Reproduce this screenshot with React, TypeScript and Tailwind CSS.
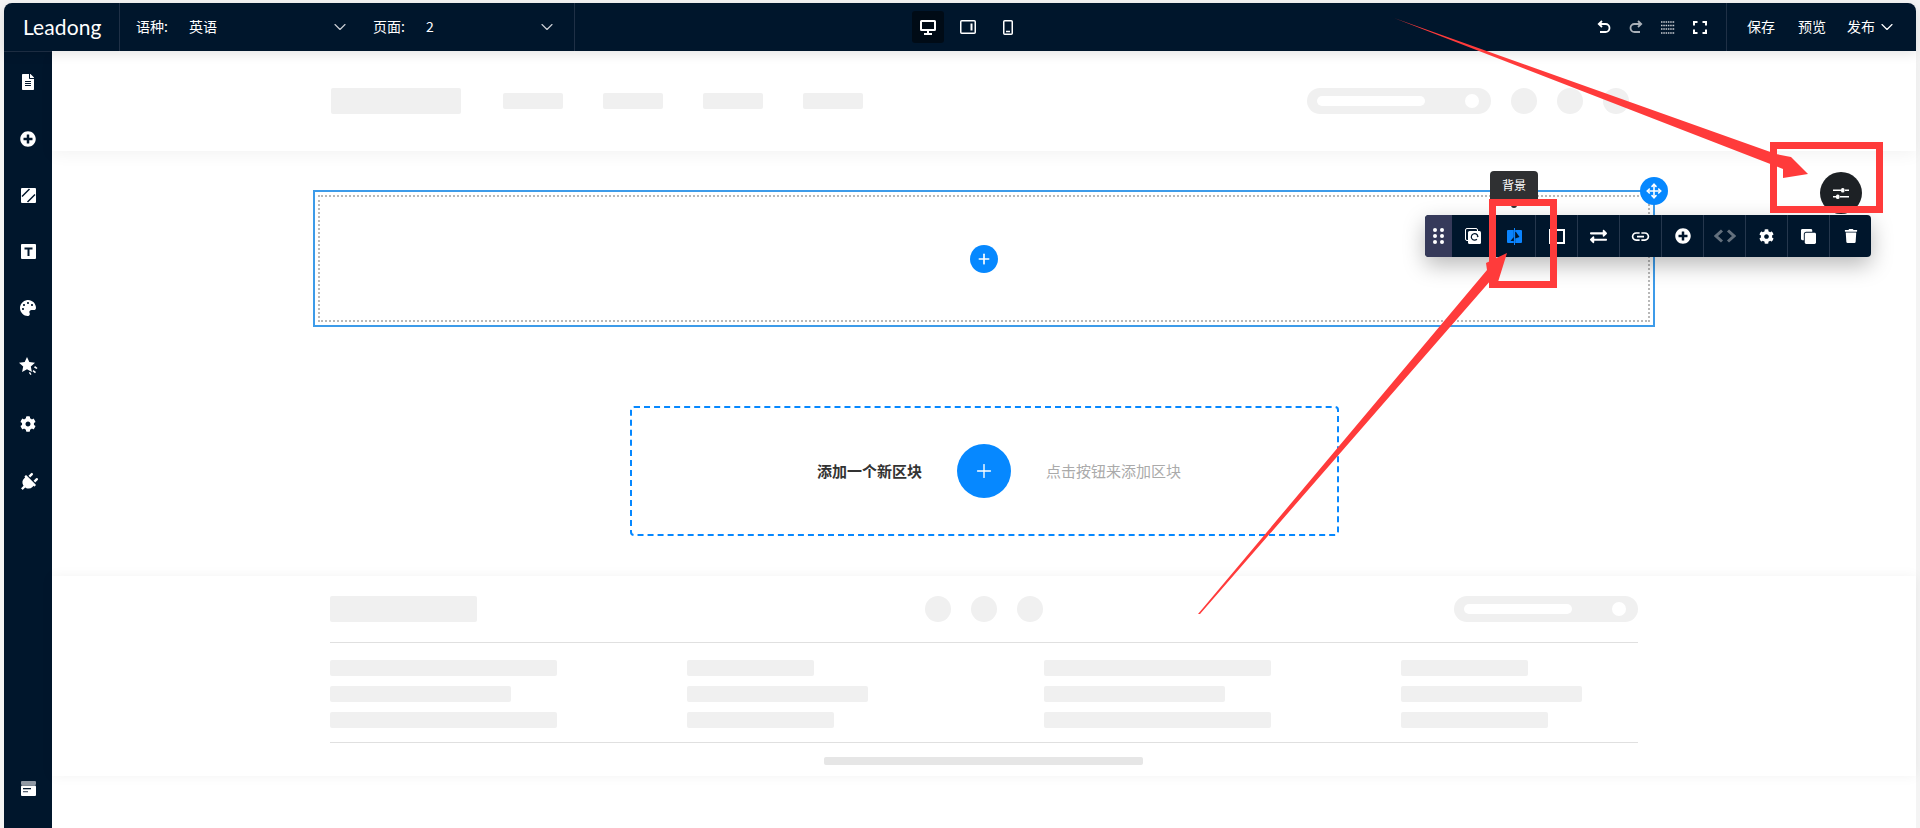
import { FaCog, FaExchangeAlt, FaFileAlt, FaPalette, FaPlug, FaPlusCircle, FaTrash, FaClone } from "react-icons/fa";
import { MdLink } from "react-icons/md";
import { ChevronDown, Move, Plus } from "lucide-react";

const cjk = "font-['Microsoft_YaHei','Noto_Sans_CJK_SC',sans-serif]";

function Skeleton({ className }: { className: string }) {
    return <div className={`rounded-[2px] bg-[#f0f0f0] ${className}`} />;
}

function SearchPill() {
    return (
        <div className="flex h-[26px] w-[184px] items-center justify-between rounded-full bg-[#f0f0f0] pl-[10px] pr-3">
            <div className="h-[10px] w-[108px] rounded-full bg-white" />
            <div className="h-[14px] w-[14px] rounded-full bg-white" />
        </div>
    );
}

function Dot() {
    return <div className="h-[26px] w-[26px] rounded-full bg-[#f0f0f0]" />;
}

function MonitorIcon() {
    return (
        <svg width="16" height="15" viewBox="0 0 16 15" fill="none" stroke="#fff" strokeWidth="2">
            <rect x="1" y="1" width="14" height="9" rx="0.500" />
            <path d="M8 10v3M4 14h8" />
        </svg>
    );
}

function TabletIcon() {
    return (
        <svg width="16" height="14" viewBox="0 0 16 14" fill="none" stroke="#fff" strokeWidth="1.500">
            <rect x="0.750" y="0.750" width="14.500" height="12.500" rx="1" />
            <path d="M11.500 3.500v7" strokeWidth="2" />
        </svg>
    );
}

function PhoneIcon() {
    return (
        <svg width="10" height="15" viewBox="0 0 10 15" fill="none" stroke="#fff" strokeWidth="1.500">
            <rect x="0.750" y="0.750" width="8.500" height="13.500" rx="1" />
            <path d="M3 11.500h4" strokeWidth="1.500" />
        </svg>
    );
}

function UndoIcon({ flip, color }: { flip?: boolean; color: string }) {
    return (
        <svg width="14" height="14" viewBox="0 0 14 14" fill="none" stroke={color} strokeWidth="1.800" className={flip ? "-scale-x-100" : ""}>
            <path d="M5 1 1.800 4 5 7" />
            <path d="M2 4h6.500a4 4 0 0 1 0 8H3" />
        </svg>
    );
}

function GridIcon() {
    return (
        <svg width="14" height="13" viewBox="0 0 14 13" fill="none" stroke="#c8ccd1" strokeWidth="1.500" strokeDasharray="1.500 0.800">
            <path d="M0 1h14M0 4.500h14M0 8h14M0 12h14" />
        </svg>
    );
}

function FullscreenIcon() {
    return (
        <svg width="14" height="13" viewBox="0 0 14 13" fill="none" stroke="#fff" strokeWidth="2">
            <path d="M1 4.500V1h3.500M9.500 1H13v3.500M13 8.500V12H9.500M4.500 12H1V8.500" />
        </svg>
    );
}

function SectionIcon() {
    return (
        <svg width="15" height="15" viewBox="0 0 15 15">
            <rect width="15" height="4" rx="1" fill="#8f98a3" />
            <rect y="4.500" width="15" height="10.500" rx="1" fill="#fff" />
            <path d="M2 7h8v1.300H2z" fill="#00162c" />
            <path d="M2 10h5v1.300H2z" fill="#5a6675" />
        </svg>
    );
}

function SlashIcon() {
    return (
        <svg width="15" height="15" viewBox="0 0 15 15">
            <rect width="15" height="15" rx="1" fill="#fff" />
            <path d="M1 8.500 8.500 1M6.500 14 14 6.500" stroke="#00162c" strokeWidth="1.500" />
        </svg>
    );
}

function TextIcon() {
    return (
        <svg width="15" height="15" viewBox="0 0 15 15">
            <rect width="15" height="15" rx="1" fill="#fff" />
            <path d="M3.500 3.500h8v2h-3V12h-2V5.500h-3z" fill="#00162c" />
        </svg>
    );
}

function StarIcon() {
    return (
        <svg width="19" height="18" viewBox="0 0 19 18" fill="#fff">
            <path d="M8 0l2.300 5 5.700.7-4.200 3.800 1.100 5.500L8 12.200 3.100 15l1.100-5.500L0 5.700 5.700 5z" />
            <path d="M16 9l2.500 2-1 1-2.500-1.500zM14.500 13l2.500 2-1 1.300-2.500-2zM11 15l1.500 2.300-1 .7-1.700-2.300z" />
        </svg>
    );
}

function SlidersIcon() {
    return (
        <svg width="16" height="13" viewBox="0 0 16 13" fill="#fff">
            <path d="M0 2.500h8v1.500H0zM12 2.500h4v1.500h-4zM0 9h3v1.500H0zM7 9h9v1.500H7z" />
            <rect x="8" y="1" width="3.500" height="4.500" rx="1.500" />
            <rect x="3" y="7.500" width="3.500" height="4.500" rx="1.500" />
        </svg>
    );
}

function CopyRefreshIcon() {
    return (
        <svg width="16" height="16" viewBox="0 0 16 16" fill="none">
            <rect x="0.500" y="0.500" width="12" height="12" rx="1.500" stroke="#fff" strokeWidth="1" />
            <rect x="3" y="3" width="13" height="13" rx="1.500" fill="#fff" />
            <path d="M12.800 8a3.300 3.300 0 1 0-.9 3.300" stroke="#00162c" strokeWidth="1.200" />
            <path d="M13.800 8h-2.200l1.100 1.500z" fill="#00162c" />
        </svg>
    );
}

function BackgroundIcon() {
    return (
        <svg width="15" height="17" viewBox="0 0 15 17">
            <path d="M0 3a1 1 0 0 1 1-1h5.800v13H1a1 1 0 0 1-1-1z" fill="#0a84ff" />
            <path d="M8.200 2H14a1 1 0 0 1 1 1v11a1 1 0 0 1-1 1H8.200z" fill="#0a84ff" />
            <path d="M7 0h1v17H7z" fill="#0a84ff" />
            <path d="M6.800 9v4H3.500z" fill="#00162c" />
            <path d="M8.200 4h.8l3.500 5-4.300 1.500z" fill="#00162c" />
        </svg>
    );
}

function CodeIcon() {
    return (
        <svg width="22" height="14" viewBox="0 0 22 14" fill="none" stroke="#63707d" strokeWidth="3">
            <path d="M8 1.500 2 7l6 5.500M14 1.500 20 7l-6 5.500" />
        </svg>
    );
}

const tools = [
    <CopyRefreshIcon />,
    <BackgroundIcon />,
    <div className="h-[15px] w-4 border-2 border-white" />,
    <FaExchangeAlt className="text-[17px] text-white" />,
    <MdLink className="text-[21px] text-white" />,
    <FaPlusCircle className="text-[16px] text-white" />,
    <CodeIcon />,
    <FaCog className="text-[15px] text-white" />,
    <FaClone className="-scale-y-100 text-[15px] text-white" />,
    <FaTrash className="text-[14px] text-white" />,
];

function Toolbar() {
    return (
        <div className="absolute left-[1110px] top-[23px] z-10 flex h-[42px] w-[446px] overflow-hidden rounded-[4px] bg-[#00162c] shadow-[0_8px_22px_rgba(0,0,0,0.28)]">
            <div className="grid w-[27px] grid-cols-2 content-center justify-center gap-x-[3px] gap-y-[2px] bg-[#363a5a] px-[8px]">
                {Array.from({ length: 6 }).map((_, i) => (
                    <div key={i} className="h-1 w-1 rounded-full bg-white" />
                ))}
            </div>
            {tools.map((icon, i) => (
                <div key={i} className={`flex h-full items-center justify-center ${i > 0 ? "w-[42px] border-l border-[#25374d]" : "w-[41px]"}`}>
                    {icon}
                </div>
            ))}
        </div>
    );
}

function Annotations() {
    return (
        <svg className="pointer-events-none absolute left-0 top-0 z-20" width="1920" height="828" fill="#ff3b3b">
            <polygon points="1394,18 1776,154 1791,157 1808,174 1783,178 1783,169" />
            <polygon points="1198,614 1487,270 1486,263 1507,253 1498,282 1491,280 1200,614" />
            <path fillRule="evenodd" d="M1489 199h68v89h-68zM1496 206v75h54v-75z" />
            <path fillRule="evenodd" d="M1770 142h113v71h-113zM1777 149v57h99v-57z" />
        </svg>
    );
}

export default function App() {
    return (
        <div className={`relative h-[828px] w-[1920px] overflow-hidden bg-[#f4f4f4] pl-1 pr-1 pt-[3px] ${cjk}`}>
            {/* top bar */}
            <div className="relative z-10 flex h-12 items-center rounded-t-lg bg-[#00162c] text-sm text-white shadow-[0_3px_12px_rgba(0,0,0,0.1)]">
                <div className="flex h-full w-[116px] items-center border-r border-[#1f3046] pl-[19px] font-['Lato',sans-serif] text-[21px] tracking-[0.1px]">
                    Leadong
                </div>
                <div className="flex h-full w-[455px] items-center border-r border-[#1f3046] pl-4">
                    <span className="w-[53px] pb-[2px]">语种:</span>
                    <span className="w-[141px] pb-[2px]">英语</span>
                    <ChevronDown size={20} strokeWidth={1.4} className="text-[#c9ced4]" />
                    <span className="ml-[23px] w-[53px] pb-[2px]">页面:</span>
                    <span className="w-[111px] pb-[2px]">2</span>
                    <ChevronDown size={20} strokeWidth={1.4} className="text-[#c9ced4]" />
                </div>
                <div className="ml-[337px] flex items-center">
                    <div className="flex h-8 w-8 items-center justify-center rounded-[3px] bg-[#000b16]">
                        <MonitorIcon />
                    </div>
                    <div className="ml-4">
                        <TabletIcon />
                    </div>
                    <div className="ml-[27px]">
                        <PhoneIcon />
                    </div>
                </div>
                <div className="ml-auto flex h-full items-center gap-[18px] pr-[19px]">
                    <UndoIcon color="#fff" />
                    <UndoIcon flip color="#a9b0b8" />
                    <GridIcon />
                    <FullscreenIcon />
                </div>
                <div className="flex h-full w-[190px] items-center border-l border-[#1f3046] pl-5">
                    <span className="w-[51px] pb-[2px]">保存</span>
                    <span className="w-[49px] pb-[2px]">预览</span>
                    <span className="pb-[2px]">发布</span>
                    <ChevronDown size={20} strokeWidth={1.4} className="ml-[2px]" />
                </div>
            </div>

            <div className="flex h-[777px]">
                {/* side bar */}
                <div className="flex w-12 flex-col items-center border-t border-[#1f3046] bg-[#00162c] text-white">
                    <div className="flex flex-1 flex-col items-center gap-[41px] pt-[22px]">
                        <FaFileAlt className="text-[16px]" />
                        <FaPlusCircle className="text-[16px]" />
                        <SlashIcon />
                        <TextIcon />
                        <FaPalette className="text-[16px]" />
                        <StarIcon />
                        <FaCog className="text-[16px]" />
                        <FaPlug className="rotate-45 text-[19px]" />
                    </div>
                    <div className="pb-[32px]">
                        <SectionIcon />
                    </div>
                </div>

                {/* canvas */}
                <div className="relative flex-1 bg-white">
                    <div className="flex h-[100px] items-center gap-[42px] pl-[279px] pr-[287px] shadow-[0_5px_14px_rgba(0,0,0,0.045)]">
                        <Skeleton className="h-[26px] w-[130px]" />
                        <div className="flex gap-10">
                            <Skeleton className="h-4 w-[60px]" />
                            <Skeleton className="h-4 w-[60px]" />
                            <Skeleton className="h-4 w-[60px]" />
                            <Skeleton className="h-4 w-[60px]" />
                        </div>
                        <div className="ml-auto flex items-center gap-5">
                            <SearchPill />
                            <Dot />
                            <Dot />
                            <Dot />
                        </div>
                    </div>

                    <div className="relative mx-auto mt-[39px] h-[137px] w-[1342px] border-2 border-[#3d9be9] p-[3px]">
                        <div className="flex h-full items-center justify-center border-2 border-dotted border-[#b8b8b8]">
                            <button className="flex h-7 w-7 items-center justify-center rounded-full bg-[#0688ff] text-white">
                                <Plus size={16} strokeWidth={2.5} />
                            </button>
                        </div>
                        <div className="absolute left-[1175px] top-[-21px] h-[34px] w-12 rounded-[4px] bg-[#2f3032] pt-[6px] text-center text-xs text-white">
                            背景
                            <div className="absolute bottom-[-3px] left-[21px] h-[3px] w-[6px] rounded-b-full bg-[#2f3032]" />
                        </div>
                        <div className="absolute left-[1325px] top-[-15px] z-10 flex h-7 w-7 items-center justify-center rounded-full bg-[#0688ff] text-white">
                            <Move size={16} strokeWidth={2.4} />
                        </div>
                        <Toolbar />
                    </div>

                    <div className="mx-auto mt-[79px] flex h-[130px] w-[709px] items-center justify-center rounded-[4px] border-2 border-dashed border-[#0688ff] pl-[30px] text-[15px]">
                        <span className="font-bold text-[#333]">添加一个新区块</span>
                        <button className="mx-[35px] flex h-[54px] w-[54px] items-center justify-center rounded-full bg-[#0688ff] text-white">
                            <Plus size={22} strokeWidth={1.5} />
                        </button>
                        <span className="text-[#aaa]">点击按钮来添加区块</span>
                    </div>

                    <div className="mt-10 h-[200px] pl-[278px] pr-[278px] pt-5 shadow-[0_0_12px_rgba(0,0,0,0.05)]">
                        <div className="grid grid-cols-[1fr_auto_1fr] items-center">
                            <Skeleton className="h-[26px] w-[147px]" />
                            <div className="flex gap-5">
                                <Dot />
                                <Dot />
                                <Dot />
                            </div>
                            <div className="justify-self-end">
                                <SearchPill />
                            </div>
                        </div>
                        <div className="mt-5 grid grid-cols-[357px_357px_357px_1fr] border-y border-[#e0e0e0] pb-[14px] pt-[17px]">
                            <div className="flex flex-col gap-[10px]">
                                <Skeleton className="h-4 w-[227px]" />
                                <Skeleton className="h-4 w-[181px]" />
                                <Skeleton className="h-4 w-[227px]" />
                            </div>
                            <div className="flex flex-col gap-[10px]">
                                <Skeleton className="h-4 w-[127px]" />
                                <Skeleton className="h-4 w-[181px]" />
                                <Skeleton className="h-4 w-[147px]" />
                            </div>
                            <div className="flex flex-col gap-[10px]">
                                <Skeleton className="h-4 w-[227px]" />
                                <Skeleton className="h-4 w-[181px]" />
                                <Skeleton className="h-4 w-[227px]" />
                            </div>
                            <div className="flex flex-col gap-[10px]">
                                <Skeleton className="h-4 w-[127px]" />
                                <Skeleton className="h-4 w-[181px]" />
                                <Skeleton className="h-4 w-[147px]" />
                            </div>
                        </div>
                        <div className="ml-[494px] mt-[14px] h-2 w-[319px] rounded-[2px] bg-[#e6e6e6]" />
                    </div>

                    <div className="absolute left-[1768px] top-[121px] flex h-[42px] w-[42px] items-center justify-center rounded-full bg-[#1d2125]">
                        <SlidersIcon />
                    </div>
                </div>
            </div>

            <Annotations />
        </div>
    );
}
